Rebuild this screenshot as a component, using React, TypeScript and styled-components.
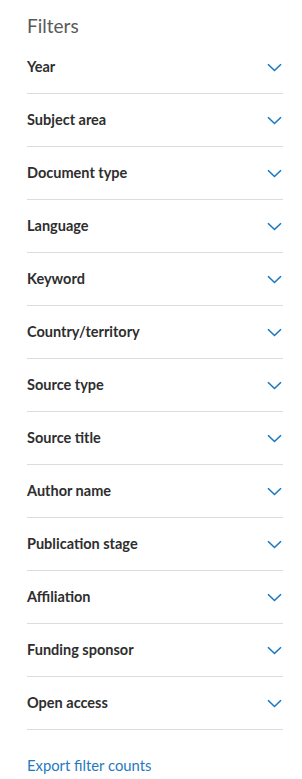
import React from "react";
import styled, { createGlobalStyle } from "styled-components";

const Global = createGlobalStyle`
  html, body { margin: 0; padding: 0; background: #ffffff; }
  body { font-family: Lato, "Open Sans", "Liberation Sans", sans-serif; }
`;

const Panel = styled.aside`
  width: 256px;
  padding: 0 19px 0 27px;
  display: flex;
  flex-direction: column;
`;

const Title = styled.h2`
  margin: 0;
  padding-top: 12px;
  height: 29px;
  font-size: 19px;
  line-height: 28px;
  font-weight: 400;
  color: #5a5a5a;
`;

const List = styled.ul`
  list-style: none;
  margin: 0;
  padding: 0;
`;

const Row = styled.li`
  height: 52px;
  border-bottom: 1px solid #dcdcdc;
  display: flex;
  align-items: center;
  justify-content: space-between;
`;

const Label = styled.span`
  padding-bottom: 2px;
  font-size: 14.5px;
  font-weight: 700;
  color: #2e2e2e;
`;

const Toggle = styled.button`
  border: 0;
  background: none;
  padding: 0;
  margin-right: 1px;
  width: 15px;
  height: 10px;
  display: flex;
  align-items: center;
  justify-content: center;
  cursor: pointer;
`;

const ExportLink = styled.a`
  margin-top: 25px;
  font-size: 14.8px;
  line-height: 20px;
  color: #1f7ac0;
  text-decoration: none;
`;

const Chevron = () => (
  <svg width="15" height="9" viewBox="0 0 15 9" fill="none">
    <path d="M1 1.2 L7.5 7.5 L14 1.2" stroke="#1a78c2" strokeWidth="1.6" />
  </svg>
);

const filters = [
  "Year",
  "Subject area",
  "Document type",
  "Language",
  "Keyword",
  "Country/territory",
  "Source type",
  "Source title",
  "Author name",
  "Publication stage",
  "Affiliation",
  "Funding sponsor",
  "Open access",
];

export default function App() {
  return (
    <>
      <Global />
      <Panel>
        <Title>Filters</Title>
        <List>
          {filters.map((f) => (
            <Row key={f}>
              <Label>{f}</Label>
              <Toggle aria-label={`Expand ${f}`}>
                <Chevron />
              </Toggle>
            </Row>
          ))}
        </List>
        <ExportLink href="#">Export filter counts</ExportLink>
      </Panel>
    </>
  );
}
